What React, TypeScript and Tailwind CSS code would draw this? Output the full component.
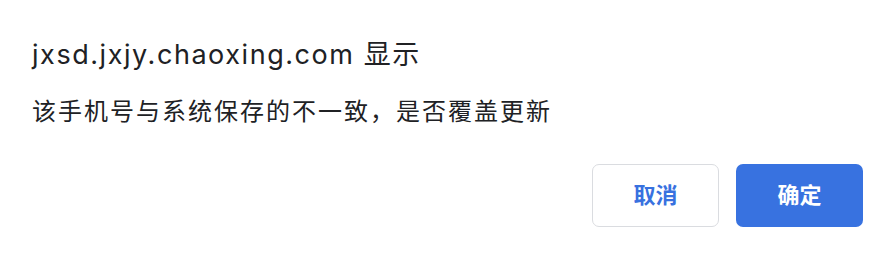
export default function App() {
  return (
    <div className="w-[896px] h-[260px] bg-white flex flex-col px-8 pt-[37px] font-['Inter','Noto_Sans_CJK_SC',sans-serif] text-[#202124]">
      <div className="text-[27px] leading-[36px] h-[36px] tracking-[1.55px]">jxsd.jxjy.chaoxing.com 显示</div>
      <div className="mt-[23px] text-[24px] leading-[32px] tracking-[2px]">该手机号与系统保存的不一致，是否覆盖更新</div>
      <div className="mt-[36px] flex justify-end gap-[17px] pr-px">
        <button className="w-[127px] h-[63px] rounded-[7px] border border-[#dadce0] bg-white text-[#3871df] text-[22px] font-bold">取消</button>
        <button className="w-[127px] h-[63px] rounded-[7px] bg-[#3872e0] text-white text-[22px] font-bold">确定</button>
      </div>
    </div>
  );
}
